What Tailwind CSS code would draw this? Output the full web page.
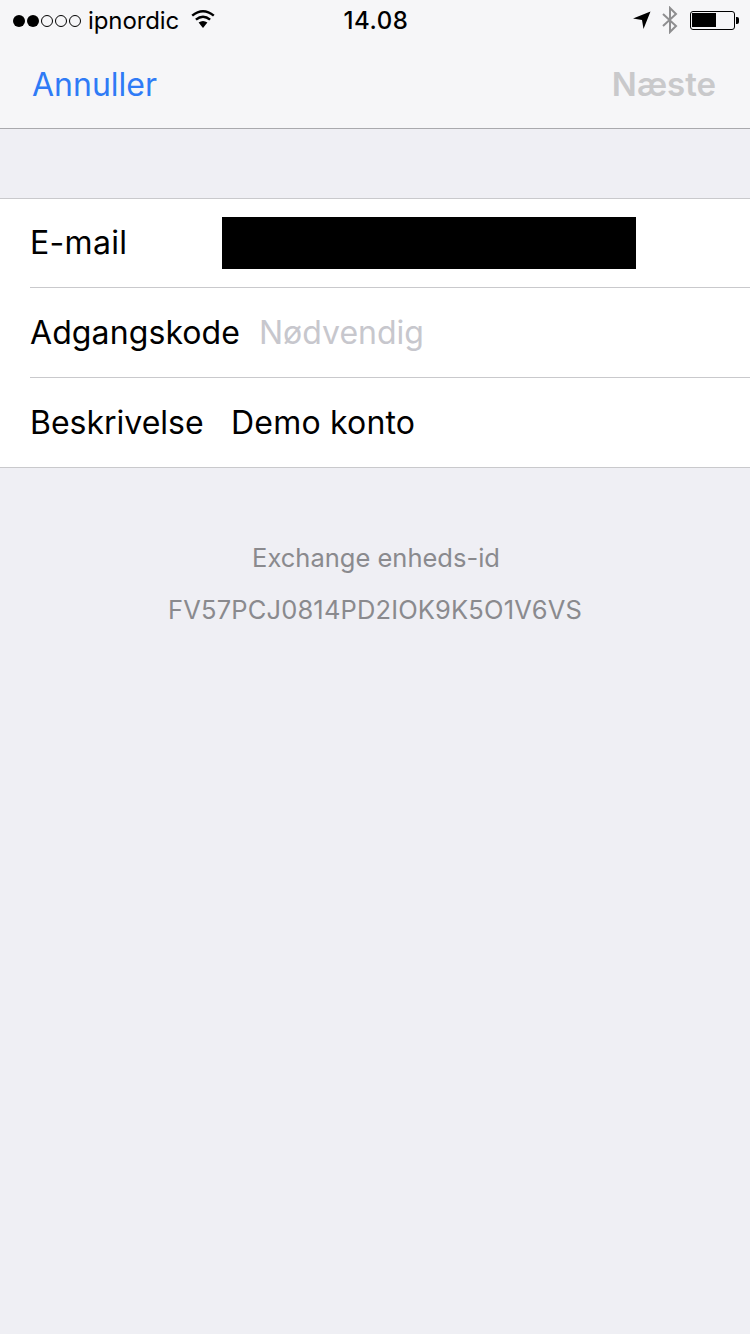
<!DOCTYPE html>
<html><head><meta charset="utf-8"><script src="https://cdn.jsdelivr.net/npm/@tailwindcss/browser@4"></script></head>
<body class="m-0">
<div class="w-[750px] h-[1334px] bg-[#efeff4] flex flex-col overflow-hidden font-['Inter','Liberation_Sans',sans-serif]">
  <header class="h-[129px] bg-[#f6f6f8] border-b border-[#a9a9ad] shrink-0 flex flex-col">
    <div class="h-[42px] flex items-center justify-between text-black">
      <div class="w-[300px] flex items-center pl-[13px]">
        <div class="flex items-center gap-[2px]">
          <span class="w-[12px] h-[12px] rounded-full bg-black"></span>
          <span class="w-[12px] h-[12px] rounded-full bg-black"></span>
          <span class="w-[12px] h-[12px] rounded-full border border-black"></span>
          <span class="w-[12px] h-[12px] rounded-full border border-black"></span>
          <span class="w-[12px] h-[12px] rounded-full border border-black"></span>
        </div>
        <span class="ml-[7px] text-[24px] leading-[30px] tracking-[-0.1px]">ipnordic</span>
        <svg class="ml-[11px] -mt-[4px]" width="26" height="20" viewBox="0 0 26 20"><path d="M13 19 L8.6 13.6 Q13 10.2 17.4 13.6Z" fill="#000"/><path d="M5.9 10.6 Q13 4.8 20.1 10.6" fill="none" stroke="#000" stroke-width="2.5"/><path d="M2.2 6.6 Q13 -2.2 23.8 6.6" fill="none" stroke="#000" stroke-width="2.5"/></svg>
      </div>
      <span class="text-[24px] font-medium leading-[30px] tracking-[0.6px] ml-[2px]">14.08</span>
      <div class="w-[300px] flex items-center justify-end pr-[11px] -mt-[2px]">
        <svg width="20" height="20" viewBox="0 0 20 20"><path d="M1 8.5 L18.5 1.5 L11.5 19 L10 10 Z" fill="#000"/></svg>
        <svg class="ml-[9px]" width="18" height="28" viewBox="0 0 18 28"><path d="M2 8 L15 20 L9 26 L9 2 L15 8 L2 20" fill="none" stroke="#8e8e90" stroke-width="2"/></svg>
        <div class="ml-[11px] w-[45px] h-[19px] rounded-[3px] border border-black p-[1.5px]"><div class="w-[24px] h-full bg-black"></div></div>
        <div class="w-[3px] h-[7px] bg-black rounded-r-[2px] ml-[1px]"></div>
      </div>
    </div>
    <div class="flex-1 flex items-center justify-between pl-[33px] pr-[34px] pb-[2px] text-[33px] leading-[40px]">
      <span class="text-[#2f7bf6] text-[32px] mt-[2px] -ml-px">Annuller</span>
      <span class="text-[#c9c9cb] font-semibold">Næste</span>
    </div>
  </header>
  <section class="mt-[69px] bg-white border-y border-[#c9c9cc] text-[32px] text-black">
    <div class="h-[88px] flex items-center pl-[30px]">
      <span class="w-[192px] tracking-[0.3px]">E-mail</span>
      <div class="w-[414px] h-[52px] bg-black"></div>
    </div>
    <div class="ml-[30px] h-px bg-[#c9c9cc]"></div>
    <div class="h-[89px] flex items-center pl-[30px]">
      <span class="w-[229px] tracking-[0.1px]">Adgangskode</span>
      <span class="text-[#c7c7cd]">Nødvendig</span>
    </div>
    <div class="ml-[30px] h-px bg-[#c9c9cc]"></div>
    <div class="h-[89px] flex items-center pl-[30px]">
      <span class="w-[201px]">Beskrivelse</span>
      <span class="tracking-[0.2px]">Demo konto</span>
    </div>
  </section>
  <footer class="pt-[75px] flex flex-col items-center gap-[22px] text-[25.5px] leading-[30px] text-[#8a8a8e]">
    <p class="ml-[2px]">Exchange enheds-id</p>
    <p class="tracking-[0.15px]">FV57PCJ0814PD2IOK9K5O1V6VS</p>
  </footer>
</div>
</body></html>
